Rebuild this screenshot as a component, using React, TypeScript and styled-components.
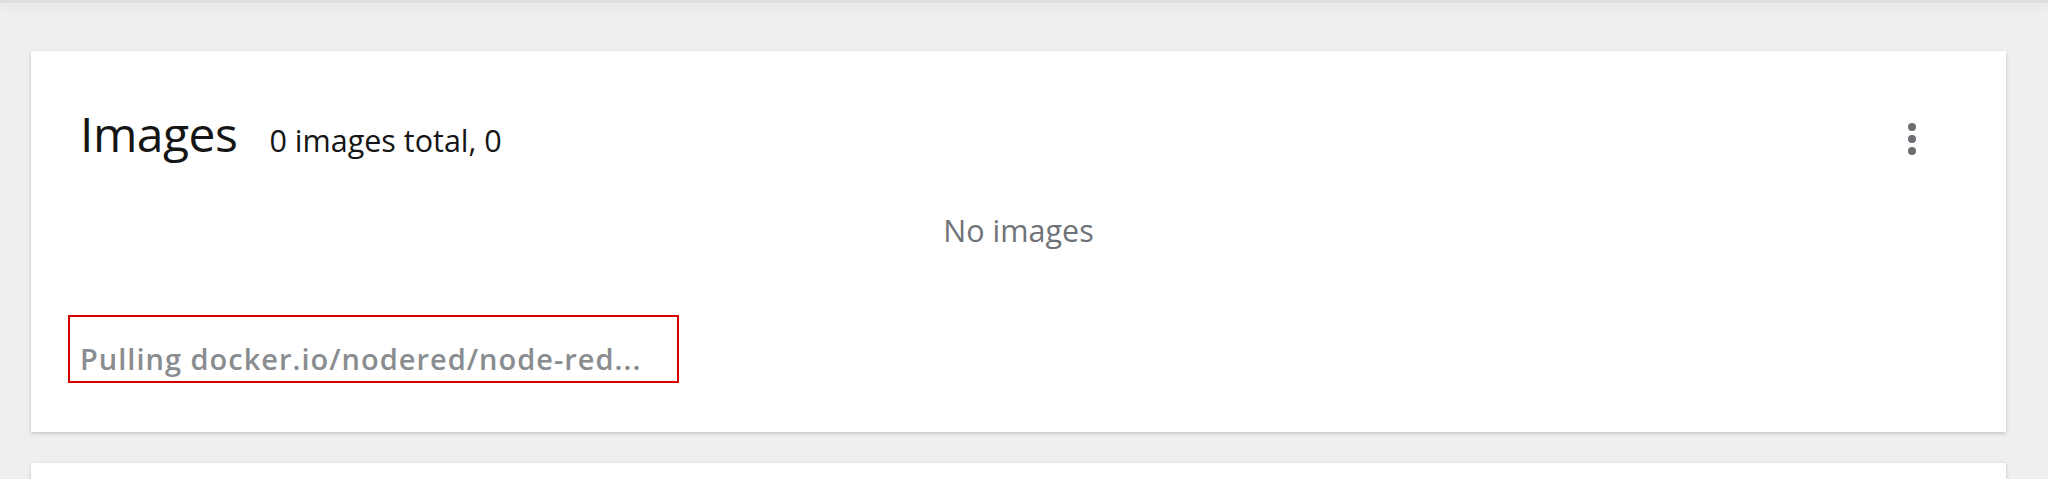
import React from 'react';
import styled, { createGlobalStyle } from 'styled-components';

const GlobalStyle = createGlobalStyle`
    html, body {
        margin: 0;
        padding: 0;
        background: #efefef;
        font-family: "Open Sans", "Liberation Sans", sans-serif;
        color: #151515;
    }
`;

const Page = styled.div`
    height: 479px;
    overflow: hidden;
    background: #efefef;
`;

const TopEdge = styled.div`
    height: 3px;
    background: #dedede;
    box-shadow: 0 3px 10px rgba(0, 0, 0, 0.1);
`;

const Content = styled.div`
    display: flex;
    flex-direction: column;
    gap: 31px;
    padding: 48px 42px 0 31px;
`;

const Card = styled.section`
    background: #fff;
    box-shadow: 0 2px 4px rgba(3, 3, 3, 0.14), 0 0 3px rgba(3, 3, 3, 0.06);
`;

const ImagesCard = styled(Card)`
    display: flex;
    flex-direction: column;
    height: 381px;
    box-sizing: border-box;
    padding: 48px 49px 0 49px;
`;

const Header = styled.div`
    display: flex;
    align-items: flex-start;
    justify-content: space-between;
    padding-top: 4px;
`;

const TitleGroup = styled.div`
    display: flex;
    align-items: baseline;
    gap: 32px;
`;

const Title = styled.h2`
    margin: 0;
    font-size: 48px;
    font-weight: 400;
    line-height: 62px;
    letter-spacing: -0.5px;
    color: #151515;
`;

const SubTitle = styled.span`
    font-size: 30.5px;
    font-weight: 400;
    color: #151515;
`;

const KebabButton = styled.button`
    display: flex;
    align-items: center;
    justify-content: center;
    width: 90px;
    height: 62px;
    margin-top: 5px;
    padding: 0;
    border: 0;
    background: transparent;
    cursor: pointer;
`;

const EmptyText = styled.div`
    margin-top: 40px;
    text-align: center;
    font-size: 30.5px;
    line-height: 40px;
    color: #6f7377;
`;

const PullingBox = styled.div`
    align-self: flex-start;
    margin: 65px 0 0 -12px;
    padding: 27px 36px 7px 10px;
    border: 2px solid #d40000;
`;

const PullingText = styled.span`
    display: block;
    font-size: 29px;
    font-weight: 600;
    line-height: 30px;
    letter-spacing: 1px;
    color: #8a8d90;
`;

const NextCard = styled(Card)`
    height: 120px;
`;

const KebabIcon: React.FC = () => (
    <svg width="10" height="34" viewBox="0 0 10 34">
        <circle cx="5" cy="5" r="4" fill="#6a6e73" />
        <circle cx="5" cy="17" r="4" fill="#6a6e73" />
        <circle cx="5" cy="29" r="4" fill="#6a6e73" />
    </svg>
);

const App: React.FC = () => {
    const images: string[] = [];

    return (
        <Page>
            <GlobalStyle />
            <TopEdge />
            <Content>
                <ImagesCard>
                    <Header>
                        <TitleGroup>
                            <Title>Images</Title>
                            <SubTitle>{images.length} images total, 0</SubTitle>
                        </TitleGroup>
                        <KebabButton aria-label="Actions">
                            <KebabIcon />
                        </KebabButton>
                    </Header>
                    {images.length === 0 && <EmptyText>No images</EmptyText>}
                    <PullingBox>
                        <PullingText>Pulling docker.io/nodered/node-red...</PullingText>
                    </PullingBox>
                </ImagesCard>
                <NextCard />
            </Content>
        </Page>
    );
};

export default App;
